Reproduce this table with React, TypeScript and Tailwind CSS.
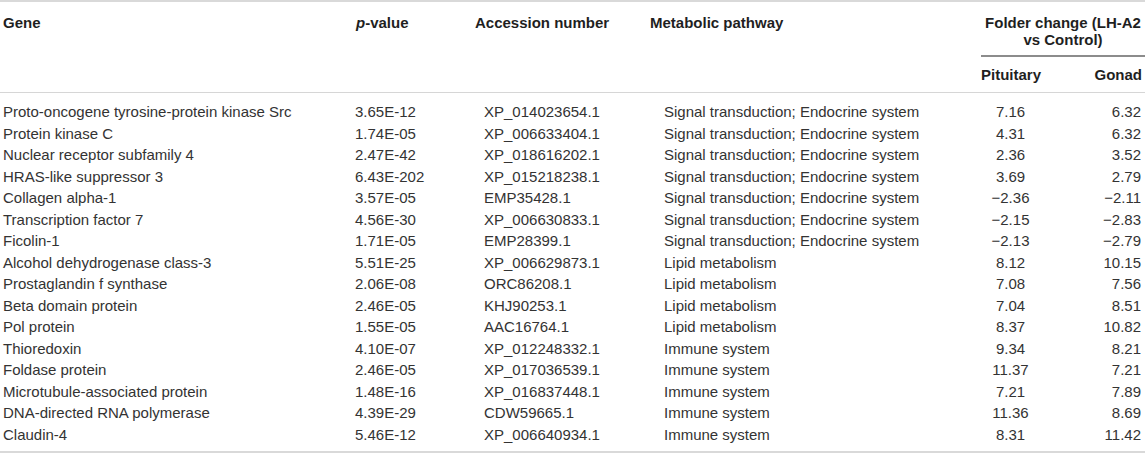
import React from 'react'

interface Row {
  gene: string
  p: string
  acc: string
  path: string
  pit: string
  gon: string
}

const SIG = 'Signal transduction; Endocrine system'
const LIP = 'Lipid metabolism'
const IMM = 'Immune system'

const rows: Row[] = [
  { gene: 'Proto-oncogene tyrosine-protein kinase Src', p: '3.65E-12', acc: 'XP_014023654.1', path: SIG, pit: '7.16', gon: '6.32' },
  { gene: 'Protein kinase C', p: '1.74E-05', acc: 'XP_006633404.1', path: SIG, pit: '4.31', gon: '6.32' },
  { gene: 'Nuclear receptor subfamily 4', p: '2.47E-42', acc: 'XP_018616202.1', path: SIG, pit: '2.36', gon: '3.52' },
  { gene: 'HRAS-like suppressor 3', p: '6.43E-202', acc: 'XP_015218238.1', path: SIG, pit: '3.69', gon: '2.79' },
  { gene: 'Collagen alpha-1', p: '3.57E-05', acc: 'EMP35428.1', path: SIG, pit: '\u22122.36', gon: '\u22122.11' },
  { gene: 'Transcription factor 7', p: '4.56E-30', acc: 'XP_006630833.1', path: SIG, pit: '\u22122.15', gon: '\u22122.83' },
  { gene: 'Ficolin-1', p: '1.71E-05', acc: 'EMP28399.1', path: SIG, pit: '\u22122.13', gon: '\u22122.79' },
  { gene: 'Alcohol dehydrogenase class-3', p: '5.51E-25', acc: 'XP_006629873.1', path: LIP, pit: '8.12', gon: '10.15' },
  { gene: 'Prostaglandin f synthase', p: '2.06E-08', acc: 'ORC86208.1', path: LIP, pit: '7.08', gon: '7.56' },
  { gene: 'Beta domain protein', p: '2.46E-05', acc: 'KHJ90253.1', path: LIP, pit: '7.04', gon: '8.51' },
  { gene: 'Pol protein', p: '1.55E-05', acc: 'AAC16764.1', path: LIP, pit: '8.37', gon: '10.82' },
  { gene: 'Thioredoxin', p: '4.10E-07', acc: 'XP_012248332.1', path: IMM, pit: '9.34', gon: '8.21' },
  { gene: 'Foldase protein', p: '2.46E-05', acc: 'XP_017036539.1', path: IMM, pit: '11.37', gon: '7.21' },
  { gene: 'Microtubule-associated protein', p: '1.48E-16', acc: 'XP_016837448.1', path: IMM, pit: '7.21', gon: '7.89' },
  { gene: 'DNA-directed RNA polymerase', p: '4.39E-29', acc: 'CDW59665.1', path: IMM, pit: '11.36', gon: '8.69' },
  { gene: 'Claudin-4', p: '5.46E-12', acc: 'XP_006640934.1', path: IMM, pit: '8.31', gon: '11.42' },
]

const cols = 'grid grid-cols-[355px_120px_175px_325px_75px_95px]'

export default function App() {
  return (
    <div className="w-[1145px] bg-white font-['Liberation_Sans',Arial,sans-serif] text-[15px]">
      {/* header */}
      <div className={`${cols} grid-rows-[55px_35px] border-y-2 border-t-[#d9d9d9] border-b-[#d6d6d6] border-b text-[#1f1f1f] font-bold leading-[17px]`}>
        <div className="row-span-2 pl-[3px] pt-[12px]">Gene</div>
        <div className="row-span-2 pl-[1px] pt-[12px]">
          <i>p</i>-value
        </div>
        <div className="row-span-2 pt-[12px]">Accession number</div>
        <div className="row-span-2 pt-[12px]">Metabolic pathway</div>
        <div className="col-span-2 ml-[6px] whitespace-nowrap border-b-2 border-[#8c8c8c] pt-[12px] text-center">
          Folder change (LH-A2
          <br />
          vs Control)
        </div>
        <div className="flex items-center pl-[6px]">Pituitary</div>
        <div className="flex items-center justify-end pr-[3px]">Gonad</div>
      </div>

      {/* body */}
      <div className="border-b-2 border-[#d9d9d9] pt-[8px] pb-[6px] text-[#333333]">
        {rows.map(r => (
          <div key={r.gene} className={`${cols} h-[21.5px] items-center whitespace-nowrap`}>
            <div className="pl-[3px]">{r.gene}</div>
            <div>{r.p}</div>
            <div className="pl-[9px]">{r.acc}</div>
            <div className="pl-[14px]">{r.path}</div>
            <div className="pl-[6px] pr-[10px] text-center">{r.pit}</div>
            <div className="pr-[4px] text-right">{r.gon}</div>
          </div>
        ))}
      </div>
    </div>
  )
}
